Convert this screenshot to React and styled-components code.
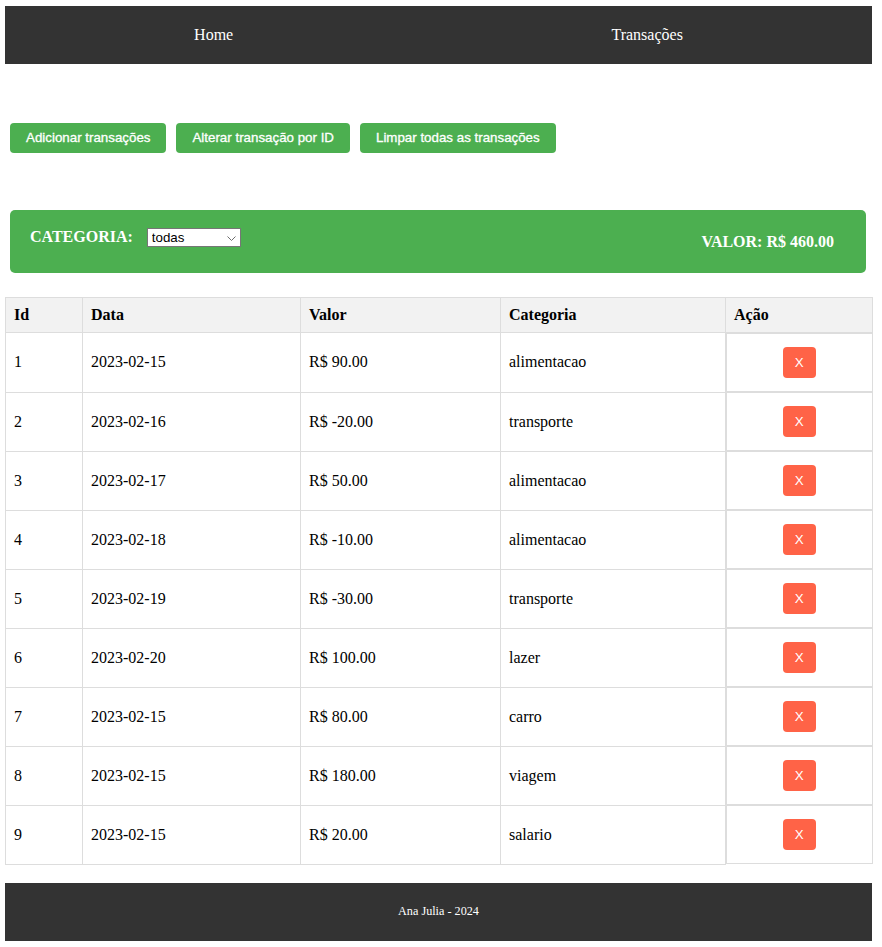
import React from "react";
import styled, { createGlobalStyle } from "styled-components";

const GlobalStyle = createGlobalStyle`
  html, body { margin: 0; padding: 0; background: #fff; }
  body { font-family: "Liberation Serif", "Times New Roman", serif; font-size: 16px; color: #000; }
`;

const Page = styled.div`
  padding: 6px 10px 6px 5px;
`;

const NavBar = styled.nav`
  height: 58px;
  background: #333;
  display: flex;
  justify-content: space-around;
  align-items: center;
`;

const NavLink = styled.a`
  color: #fff;
  text-decoration: none;
  font-size: 16px;
`;

const Actions = styled.div`
  display: flex;
  gap: 10px;
  margin-top: 59px;
  padding-left: 5px;
`;

const GreenButton = styled.button`
  font-family: "Liberation Sans", Arial, sans-serif;
  font-size: 13.333px;
  line-height: 14px;
  padding: 8px 16px;
  border: none;
  border-radius: 4px;
  background: #4caf50;
  color: #fff;
  cursor: pointer;
  -webkit-text-stroke: 0.3px #fff;
`;

const FilterBar = styled.div`
  margin: 57px 6px 0 5px;
  height: 63px;
  box-sizing: border-box;
  background: #4caf50;
  border-radius: 5px;
  padding: 0 32px 0 20px;
  display: flex;
  justify-content: space-between;
  align-items: center;
  color: #fff;
`;

const FilterGroup = styled.div`
  display: flex;
  align-items: center;
  padding-bottom: 9px;
`;

const FilterLabel = styled.label`
  font-weight: bold;
  font-size: 16px;
`;

const SelectWrap = styled.div`
  position: relative;
  margin-left: 14px;
  width: 94px;
  height: 19px;
`;

const Select = styled.select`
  appearance: none;
  -webkit-appearance: none;
  box-sizing: border-box;
  width: 94px;
  height: 19px;
  margin: 0;
  padding: 0 0 0 4px;
  border: 1px solid #767676;
  border-radius: 0;
  background: #fff;
  color: #000;
  font-family: "Liberation Sans", Arial, sans-serif;
  font-size: 13.333px;
  line-height: 17px;
`;

const Chevron = styled.svg`
  position: absolute;
  right: 5px;
  top: 8px;
  pointer-events: none;
`;

const Total = styled.h3`
  margin: 0;
  font-size: 16px;
  font-weight: bold;
`;

const Table = styled.table`
  margin-top: 24px;
  width: 100%;
  border-collapse: collapse;
  table-layout: fixed;
`;

const Th = styled.th`
  background: #f2f2f2;
  border: 1px solid #ddd;
  padding: 8px;
  text-align: left;
  font-size: 16px;
  line-height: 18px;
`;

const Td = styled.td`
  border: 1px solid #ddd;
  padding: 8px;
  font-size: 16px;
  vertical-align: middle;
`;

const ActionCell = styled.td`
  border: 1px solid #ddd;
  display: flex;
  justify-content: center;
  align-items: center;
  padding: 13px 8px;
`;

const DeleteButton = styled.button`
  font-family: "Liberation Sans", Arial, sans-serif;
  font-size: 13.333px;
  line-height: 15px;
  padding: 8px 12px;
  border: none;
  border-radius: 4px;
  background: #ff6347;
  color: #fff;
  cursor: pointer;
`;

const Footer = styled.footer`
  margin-top: 18px;
  height: 58px;
  background: #333;
  color: #fff;
  display: flex;
  justify-content: center;
  align-items: center;
  font-size: 12.2px;
`;

const transactions = [
  { id: 1, data: "2023-02-15", valor: 90, categoria: "alimentacao" },
  { id: 2, data: "2023-02-16", valor: -20, categoria: "transporte" },
  { id: 3, data: "2023-02-17", valor: 50, categoria: "alimentacao" },
  { id: 4, data: "2023-02-18", valor: -10, categoria: "alimentacao" },
  { id: 5, data: "2023-02-19", valor: -30, categoria: "transporte" },
  { id: 6, data: "2023-02-20", valor: 100, categoria: "lazer" },
  { id: 7, data: "2023-02-15", valor: 80, categoria: "carro" },
  { id: 8, data: "2023-02-15", valor: 180, categoria: "viagem" },
  { id: 9, data: "2023-02-15", valor: 20, categoria: "salario" },
];

const columns = [77, 218, 200, 225, 147];

export default function App() {
  const total = transactions.reduce((s, t) => s + t.valor, 0);
  return (
    <Page>
      <GlobalStyle />
      <NavBar>
        <NavLink href="#">Home</NavLink>
        <NavLink href="#">Transações</NavLink>
      </NavBar>
      <Actions>
        <GreenButton>Adicionar transações</GreenButton>
        <GreenButton>Alterar transação por ID</GreenButton>
        <GreenButton>Limpar todas as transações</GreenButton>
      </Actions>
      <FilterBar>
        <FilterGroup>
          <FilterLabel htmlFor="cat">CATEGORIA:</FilterLabel>
          <SelectWrap>
            <Select id="cat" defaultValue="todas">
              <option value="todas">todas</option>
              <option value="alimentacao">alimentacao</option>
              <option value="transporte">transporte</option>
              <option value="lazer">lazer</option>
              <option value="carro">carro</option>
              <option value="viagem">viagem</option>
              <option value="salario">salario</option>
            </Select>
            <Chevron width="9" height="5" viewBox="0 0 9 5">
              <path d="M0.5 0.5 L4.5 4.5 L8.5 0.5" fill="none" stroke="#6e6e6e" strokeWidth="1" />
            </Chevron>
          </SelectWrap>
        </FilterGroup>
        <Total>VALOR: R$ {total.toFixed(2)}</Total>
      </FilterBar>
      <Table>
        <colgroup>
          {columns.map((w, i) => (
            <col key={i} style={{ width: w }} />
          ))}
        </colgroup>
        <thead>
          <tr>
            <Th>Id</Th>
            <Th>Data</Th>
            <Th>Valor</Th>
            <Th>Categoria</Th>
            <Th>Ação</Th>
          </tr>
        </thead>
        <tbody>
          {transactions.map((t) => (
            <tr key={t.id}>
              <Td>{t.id}</Td>
              <Td>{t.data}</Td>
              <Td>R$ {t.valor.toFixed(2)}</Td>
              <Td>{t.categoria}</Td>
              <ActionCell>
                <DeleteButton>X</DeleteButton>
              </ActionCell>
            </tr>
          ))}
        </tbody>
      </Table>
      <Footer>Ana Julia - 2024</Footer>
    </Page>
  );
}
